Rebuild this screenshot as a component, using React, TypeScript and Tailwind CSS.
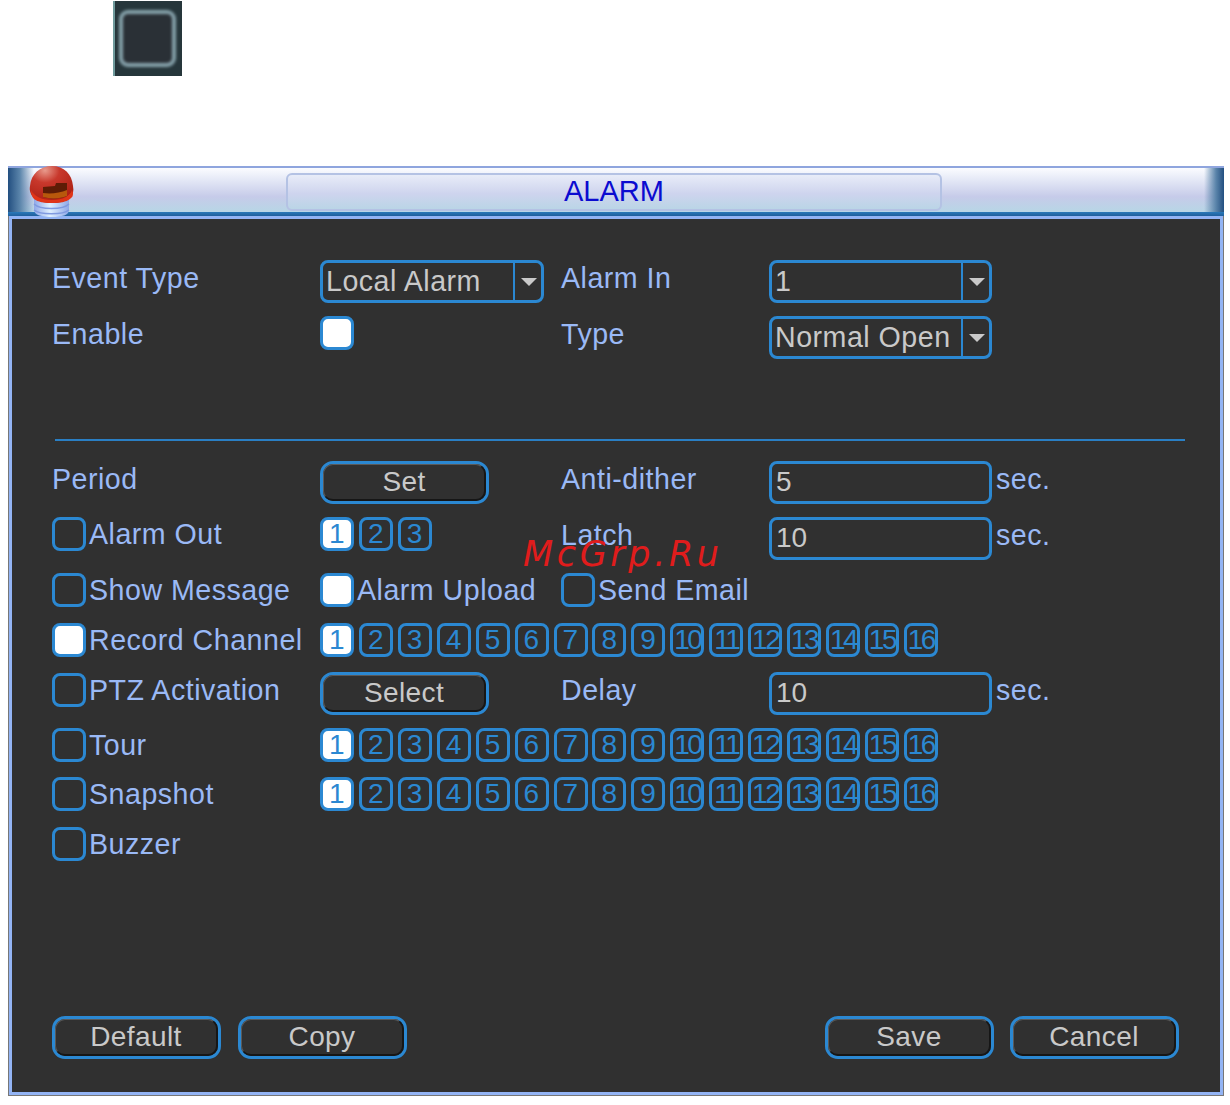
const channels = Array.from({ length: 16 }, (_, i) => i + 1)

function AlarmLight() {
  return (
    <svg className="absolute left-[21px] top-[-2px]" width="46" height="52" viewBox="0 0 46 52">
      <defs>
        <linearGradient id="base" x1="0" y1="0" x2="1" y2="0">
          <stop offset="0" stopColor="#8fa8e8" />
          <stop offset="0.45" stopColor="#dff0ff" />
          <stop offset="1" stopColor="#8fa8e8" />
        </linearGradient>
        <radialGradient id="dome" cx="0.35" cy="0.12" r="0.95">
          <stop offset="0" stopColor="#e89a8c" />
          <stop offset="0.35" stopColor="#c8382c" />
          <stop offset="1" stopColor="#a81c10" />
        </radialGradient>
      </defs>
      <path d="M5 28h35v16c0 5-7 7-17 7S5 49 5 44z" fill="url(#base)" />
      <path d="M5 38c6 6 29 6 35 0M5 44c6 5 29 5 35 0" fill="none" stroke="#7f9ae0" strokeWidth="1.5" />
      <path d="M1 20C2 8 11 0 23 0s20 8 21 20c1 5 0 9-3 12-4 3-10 5-18 5S9 35 5 32C2 29 0 25 1 20z" fill="url(#dome)" />
      <path d="M2 24c3 6 10 10 21 10s18-4 20-10l1 3c0 4-1 4-3 6-4 3-10 4-18 4S9 36 5 33C3 31 2 28 2 24z" fill="#e03418" />
      <path d="M14 21l12-1 1-3h11v13c-7 3-17 3-24 1z" fill="#5e1c06" />
      <path d="M14 27c8 1 17 0 24-3v6c-7 3-17 3-24 1z" fill="#b8580c" />
    </svg>
  )
}

function Label({ children }: { children: string }) {
  return <span className="block h-[36px] leading-[36px] text-[#9ab9f6] whitespace-nowrap">{children}</span>
}

function Check({ checked, label }: { checked?: boolean; label?: string }) {
  return (
    <div className="flex items-start gap-[3px]">
      <span
        className={
          'block w-[34px] h-[34px] shrink-0 rounded-[8px] border-[3px] border-[#2b88d2] ' +
          (checked ? 'bg-white' : '')
        }
      />
      {label && <span className="leading-[34px] text-[#9ab9f6] whitespace-nowrap">{label}</span>}
    </div>
  )
}

function Channels({ list }: { list: number[] }) {
  return (
    <div className="flex gap-[4.93px] w-[640px]">
      {list.map((n) => (
        <span
          key={n}
          className={
            'flex items-center justify-center shrink-0 w-[34px] h-[34px] rounded-[8px] border-[3px] border-[#2b88d2] text-[28px] text-[#2b88d2] ' +
            (n > 9 ? 'tracking-[-2.5px] ' : '') +
            (n === 1 ? 'bg-white' : '')
          }
        >
          {n}
        </span>
      ))}
    </div>
  )
}

function Select({ value, width }: { value: string; width: string }) {
  return (
    <div className={'flex h-[43px] rounded-[8px] border-[3px] border-[#2b88d2] text-[#c9c9c9] ' + width}>
      <span className="flex-1 pl-[3px] leading-[37px] whitespace-nowrap">{value}</span>
      <span className="flex items-center justify-center w-[28px] pl-[2px] border-l-[2px] border-[#2b88d2]">
        <svg width="16" height="8" viewBox="0 0 16 8">
          <path d="M0 0h16L8 8z" fill="#c9c9c9" />
        </svg>
      </span>
    </div>
  )
}

function Input({ value }: { value: string }) {
  return (
    <div className="w-[223px] h-[43px] pl-[4px] leading-[36px] rounded-[8px] border-[3px] border-[#2b88d2] text-[28px] tracking-normal text-[#c9c9c9]">
      {value}
    </div>
  )
}

function Button({ children }: { children: string }) {
  return (
    <div className="w-[169px] h-[43px] rounded-[13px] border-[3px] border-[#2b88d2]">
      <div className="flex items-center justify-center h-full rounded-[10px] border border-t-[#5a5a5a] border-l-[#5a5a5a] border-r-2 border-b-2 border-r-[#161616] border-b-[#161616] text-[28px] tracking-[0.4px] text-[#c9c9c9]">
        {children}
      </div>
    </div>
  )
}

function Row({ className, children }: { className: string; children: React.ReactNode }) {
  return (
    <div className={'grid grid-cols-[268px_241px_208px_227px_1fr] h-[43px] items-start ' + className}>{children}</div>
  )
}

function Sec() {
  return <Label>sec.</Label>
}

export default function App() {
  return (
    <div className="relative w-[1230px] h-[1105px] overflow-hidden bg-white font-['Liberation_Sans',Arial,sans-serif] text-[28.6px] tracking-[0.5px]">
      {/* small thumbnail at the top of the page */}
      <div className="ml-[113px] mt-[1px] w-[69px] h-[75px] pt-[9px] pl-[4px] border-l-2 border-[#6f9a9c] bg-[#26363b] overflow-hidden">
        <div className="w-[57px] h-[57px] rounded-[9px] border-[4px] border-[#86a2ab] bg-[#2a3036] blur-[1.5px]" />
      </div>

      <div className="ml-[8px] mt-[90px] w-[1216px]">
        {/* title bar */}
        <div className="relative h-[50px] border-t-2 border-[#8fa5de] bg-[linear-gradient(#fbfcff_0%,#e4e8f6_25%,#c6cbe9_60%,#b9d5e6_88%,#b9d5e6_91%,#2a78b8_92%,#1f5f9c_100%)]">
          <div className="absolute left-0 top-0 bottom-[4px] w-[26px] bg-[linear-gradient(90deg,#234f80,#5a84aa_45%,rgba(255,255,255,0))]" />
          <div className="absolute right-0 top-0 bottom-[4px] w-[20px] bg-[linear-gradient(270deg,#234f80,#5a84aa_40%,rgba(255,255,255,0))]" />
          <AlarmLight />
          <div className="relative ml-[278px] w-[656px] h-[38px] top-[5px] flex items-center justify-center rounded-[6px] border-[2px] border-[#b4c2e4] bg-[linear-gradient(#e8ecf8,#ced4ee_55%,#bad5e6)] text-[29px] tracking-normal text-[#0b0bd0]">
            ALARM
          </div>
        </div>

        {/* main panel */}
        <div className="h-[880px] border border-[#777777] border-t-0 bg-[#303030]">
          <div className="h-full border-[3px] border-[#93b4f4] pl-[40px] pr-[40px] pt-[41px]">
            <Row className="">
              <Label>Event Type</Label>
              <Select value="Local Alarm" width="w-[224px]" />
              <Label>Alarm In</Label>
              <Select value="1" width="w-[223px]" />
            </Row>
            <Row className="mt-[13px]">
              <Label>Enable</Label>
              <Check checked />
              <Label>Type</Label>
              <Select value="Normal Open" width="w-[223px]" />
            </Row>

            <div className="ml-[3px] mt-[80px] w-[1130px] h-[2px] bg-[#2a7fc4]" />

            <Row className="mt-[20px]">
              <Label>Period</Label>
              <Button>Set</Button>
              <Label>Anti-dither</Label>
              <Input value="5" />
              <Sec />
            </Row>
            <Row className="mt-[13px]">
              <Check label="Alarm Out" />
              <Channels list={[1, 2, 3]} />
              <Label>Latch</Label>
              <Input value="10" />
              <Sec />
            </Row>
            <Row className="mt-[13px]">
              <Check label="Show Message" />
              <Check checked label="Alarm Upload" />
              <Check label="Send Email" />
            </Row>
            <Row className="mt-[7px]">
              <Check checked label="Record Channel" />
              <Channels list={channels} />
            </Row>
            <Row className="mt-[6px]">
              <div className="mt-[1px]">
                <Check label="PTZ Activation" />
              </div>
              <Button>Select</Button>
              <Label>Delay</Label>
              <Input value="10" />
              <Sec />
            </Row>
            <Row className="mt-[13px]">
              <Check label="Tour" />
              <Channels list={channels} />
            </Row>
            <Row className="mt-[6px]">
              <Check label="Snapshot" />
              <Channels list={channels} />
            </Row>
            <Row className="mt-[7px]">
              <Check label="Buzzer" />
            </Row>

            <div className="flex mt-[146px] w-[1127px]">
              <Button>Default</Button>
              <div className="ml-[17px]">
                <Button>Copy</Button>
              </div>
              <div className="ml-auto">
                <Button>Save</Button>
              </div>
              <div className="ml-[16px]">
                <Button>Cancel</Button>
              </div>
            </div>
          </div>
        </div>
      </div>

      {/* watermark */}
      <span className="absolute left-[523px] top-[532px] font-['DejaVu_Sans',sans-serif] italic text-[35px] leading-[44px] tracking-[3.6px] text-[#e01c1c]">
        McGrp.Ru
      </span>
    </div>
  )
}
